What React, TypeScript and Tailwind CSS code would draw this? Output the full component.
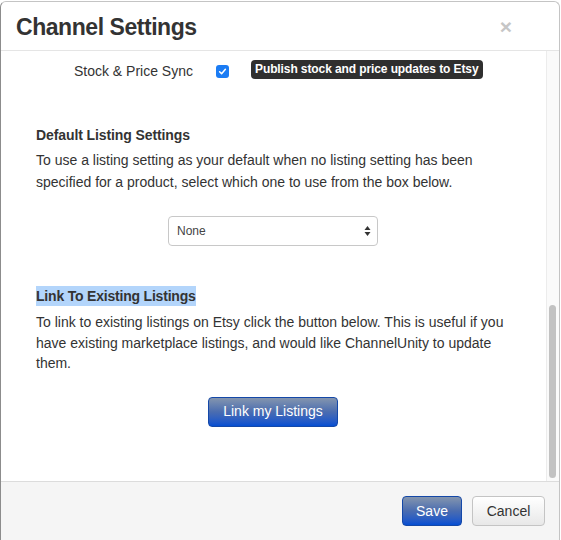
import React from "react";

function Checkbox() {
  return (
    <span className="ml-[23px] flex h-[13px] w-[13px] items-center justify-center rounded-[3px] bg-[#1b7cf4]">
      <svg width="9" height="9" viewBox="0 0 9 9" fill="none">
        <path d="M1.6 4.7 L3.6 6.7 L7.4 2.2" stroke="white" strokeWidth="1.5" strokeLinecap="round" strokeLinejoin="round" />
      </svg>
    </span>
  );
}

export default function App() {
  return (
    <div className="h-[540px] w-[561px] overflow-hidden bg-white font-['Liberation_Sans',Arial,sans-serif] text-[#333]">
      <div className="mt-px flex h-[541px] w-[560px] flex-col overflow-hidden rounded-t-[6px] border-l border-r border-t border-l-[#8c8c8c] border-r-[#c4c4c4] border-t-[#c4c4c4]">
        {/* Header */}
        <div className="flex h-[49px] shrink-0 items-center justify-between border-b border-[#e5e5e5] pl-[15px] pr-[47px]">
          <h3 className="mt-[2px] text-[23px] font-bold leading-none tracking-[-0.45px] text-[#333]">Channel Settings</h3>
          <span className="text-[21px] font-bold leading-none text-[#c6c6c6]">×</span>
        </div>

        {/* Body */}
        <div className="flex h-[430px] shrink-0">
          <div className="flex-1 pl-[35px] pr-[36px] pt-[10px] text-[14px]">
            <div className="flex h-[20px] items-center">
              <span className="w-[157px] text-right leading-[20px]">Stock &amp; Price Sync</span>
              <Checkbox />
              <span className="-mt-[3px] ml-[22px] rounded-[4px] bg-[#2f2f2f] px-[4px] text-[12px] font-bold leading-[19px] tracking-[-0.1px] text-white">
                Publish stock and price updates to Etsy
              </span>
            </div>

            <div className="mt-[44px] text-[14px] font-bold leading-[20px] tracking-[-0.1px]">Default Listing Settings</div>
            <p className="mt-[4px] whitespace-nowrap leading-[22px]">
              To use a listing setting as your default when no listing setting has been
              <br />
              specified for a product, select which one to use from the box below.
            </p>

            <div className="mt-[23px] flex justify-center">
              <div className="flex h-[30px] w-[210px] items-center justify-between rounded-[4px] border border-[#c8c8c8] bg-white pl-[8px] pr-[6px]">
                <span className="text-[12px] text-[#444]">None</span>
                <svg width="7" height="12" viewBox="0 0 7 12">
                  <path d="M3.5 1 L6.5 5 L0.5 5 Z" fill="#333" />
                  <path d="M3.5 11 L6.5 7 L0.5 7 Z" fill="#333" />
                </svg>
              </div>
            </div>

            <div className="mt-[40px]">
              <span className="inline-block bg-[#b3d5fb] text-[14px] font-bold leading-[20px] tracking-[-0.2px]">Link To Existing Listings</span>
            </div>
            <p className="mt-[5px] whitespace-nowrap leading-[20.5px]">
              To link to existing listings on Etsy click the button below. This is useful if you
              <br />
              have existing marketplace listings, and would like ChannelUnity to update
              <br />
              them.
            </p>

            <div className="mt-[23px] flex justify-center">
              <button className="h-[30px] w-[130px] rounded-[4px] border border-[#1448a8] bg-linear-to-b from-[#8495ae] via-[#4a6cb0] to-[#034ed2] text-[14px] text-white">
                Link my Listings
              </button>
            </div>
          </div>

          {/* Scrollbar */}
          <div className="relative w-[13px] border-l border-[#ececec] bg-[#fafafa]">
            <div className="absolute left-[2px] top-[254px] h-[173px] w-[7px] rounded-full bg-[#c2c2c2]" />
          </div>
        </div>

        {/* Footer */}
        <div className="flex flex-1 items-start justify-end gap-[10px] border-t border-[#dcdcdc] bg-[#f5f5f5] pr-[14px] pt-[14px]">
          <button className="h-[30px] w-[60px] rounded-[4px] border border-[#1448a8] bg-linear-to-b from-[#8495ae] via-[#4a6cb0] to-[#034ed2] text-[14px] text-white">
            Save
          </button>
          <button className="h-[30px] w-[73px] rounded-[4px] border border-[#c4c4c4] bg-linear-to-b from-white to-[#e8e8e8] text-[14px] text-[#333]">
            Cancel
          </button>
        </div>
      </div>
    </div>
  );
}
